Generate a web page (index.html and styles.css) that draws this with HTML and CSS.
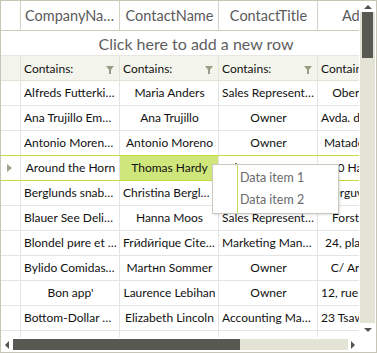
FILE: index.html
```html
<!DOCTYPE html>
<html>
<head>
<meta charset="utf-8">
<link rel="stylesheet" href="styles.css">
</head>
<body>
<div class="grid">
  <div class="viewport">
    <div class="row header">
      <div class="cell ind"></div>
      <div class="cell col">CompanyName</div>
      <div class="cell col">ContactName</div>
      <div class="cell col">ContactTitle</div>
      <div class="cell col">Address</div>
    </div>
    <div class="row newrow"><span class="newtext">Click here to add a new row</span></div>
    <div class="row filter">
      <div class="cell ind"></div>
      <div class="cell col"><span class="flabel">Contains:</span><span class="funnel"></span></div>
      <div class="cell col"><span class="flabel">Contains:</span><span class="funnel"></span></div>
      <div class="cell col"><span class="flabel">Contains:</span><span class="funnel"></span></div>
      <div class="cell col"><span class="flabel">Contains:</span><span class="funnel"></span></div>
    </div>
    <div class="row data"><div class="cell ind"></div><div class="cell col">Alfreds Futterkiste</div><div class="cell col">Maria Anders</div><div class="cell col">Sales Representative</div><div class="cell col">Obere Str. 57</div></div>
    <div class="row data"><div class="cell ind"></div><div class="cell col">Ana Trujillo Emparedados y helados</div><div class="cell col">Ana Trujillo</div><div class="cell col">Owner</div><div class="cell col">Avda. de la Constitución 2222</div></div>
    <div class="row data"><div class="cell ind"></div><div class="cell col">Antonio Moreno Taquería</div><div class="cell col">Antonio Moreno</div><div class="cell col">Owner</div><div class="cell col">Mataderos 2312</div></div>
    <div class="row data selected"><div class="cell ind"><span class="arrow"></span></div><div class="cell col">Around the Horn</div><div class="cell col current">Thomas Hardy</div><div class="cell col">Sales Representative</div><div class="cell col">120 Hanover Sq.</div></div>
    <div class="row data"><div class="cell ind"></div><div class="cell col">Berglunds snabbköp</div><div class="cell col">Christina Berglund</div><div class="cell col">Order Administrator</div><div class="cell col">Berguvsvägen 8</div></div>
    <div class="row data"><div class="cell ind"></div><div class="cell col">Blauer See Delikatessen</div><div class="cell col">Hanna Moos</div><div class="cell col">Sales Representative</div><div class="cell col">Forsterstr. 57</div></div>
    <div class="row data"><div class="cell ind"></div><div class="cell col">Blondel pиre et fils</div><div class="cell col">Frйdйrique Citeaux</div><div class="cell col">Marketing Manager</div><div class="cell col">24, place Kléber</div></div>
    <div class="row data"><div class="cell ind"></div><div class="cell col">Bуlido Comidas preparadas</div><div class="cell col">Martнn Sommer</div><div class="cell col">Owner</div><div class="cell col">C/ Araquil, 67</div></div>
    <div class="row data"><div class="cell ind"></div><div class="cell col">Bon app'</div><div class="cell col">Laurence Lebihan</div><div class="cell col">Owner</div><div class="cell col">12, rue des Bouchers</div></div>
    <div class="row data"><div class="cell ind"></div><div class="cell col">Bottom-Dollar Markets</div><div class="cell col">Elizabeth Lincoln</div><div class="cell col">Accounting Manager</div><div class="cell col">23 Tsawassen Blvd.</div></div>
    <div class="row data"><div class="cell ind"></div><div class="cell col">B's Beverages</div><div class="cell col">Victoria Ashworth</div><div class="cell col">Sales Representative</div><div class="cell col">Fauntleroy Circus</div></div>

    <div class="menu">
      <div class="menu-item">Data item 1</div>
      <div class="menu-item">Data item 2</div>
    </div>
  </div>
  <div class="vscroll">
    <div class="varrow up"></div>
    <div class="vtrack"><div class="vthumb"></div></div>
    <div class="varrow down"></div>
  </div>
  <div class="hscroll">
    <div class="harrow left"></div>
    <div class="htrack"><div class="hthumb"></div></div>
    <div class="harrow right"></div>
  </div>
  <div class="corner"></div>
</div>
</body>
</html>
```
FILE: styles.css
```css
html, body {
  margin: 0;
  padding: 0;
  background: #ffffff;
}
.grid {
  width: 375px;
  height: 351px;
  border: 1px solid #c6c6b6;
  display: grid;
  grid-template-columns: 358px 17px;
  grid-template-rows: 336px 15px;
  font-family: Lato, "Open Sans", sans-serif;
  background: #fff;
}
.viewport {
  position: relative;
  overflow: hidden;
  background: #fff;
}
.row {
  display: flex;
  height: 24px;
  border-bottom: 1px solid #e4e4e4;
  white-space: nowrap;
}
.cell {
  flex: none;
  box-sizing: border-box;
  border-right: 1px solid #e4e4e4;
  overflow: hidden;
  text-overflow: ellipsis;
  white-space: nowrap;
}
.ind {
  width: 20px;
  display: flex;
  align-items: center;
  justify-content: center;
}
.col {
  width: 99px;
  padding: 0 2px 0 3px;
  text-align: center;
}
.header {
  height: 29px;
  border-bottom: 1px solid #cdcdbd;
}
.header .cell {
  border-right-color: #d3d3c4;
  line-height: 29px;
  font-size: 14.5px;
  color: #5a5a5a;
  padding: 0 3px 0 4px;
}
.newrow {
  justify-content: center;
  align-items: center;
  padding-left: 32px;
  font-size: 16px;
  color: #5e5e5e;
  border-bottom-color: #e8e8e0;
}
.filter {
  background: #f3f4ec;
  border-bottom-color: #e2e2d6;
}
.filter .cell {
  display: flex;
  align-items: center;
  justify-content: space-between;
  padding: 0 5px 0 3px;
  border-right-color: #e2e2d6;
  font-size: 12px;
  color: #111;
}
.funnel {
  width: 0;
  height: 0;
  border-left: 4px solid transparent;
  border-right: 4px solid transparent;
  border-top: 5px solid #9c9c84;
  position: relative;
  margin-top: 1px;
}
.funnel::after {
  content: "";
  position: absolute;
  left: -1px;
  top: -1px;
  width: 2px;
  height: 4px;
  background: #9c9c84;
}
.data .cell {
  line-height: 24px;
  font-size: 12px;
  color: #111;
}
.selected {
  border-top: 1px solid #c3de3e;
  border-bottom: 1px solid #c3de3e;
  margin-top: -1px;
}
.current {
  background: #cfe67a;
}
.arrow {
  width: 0;
  height: 0;
  border-top: 4.5px solid transparent;
  border-bottom: 4.5px solid transparent;
  border-left: 5px solid #a3a392;
  margin-left: -2px;
}
.menu {
  position: absolute;
  left: 211px;
  top: 163px;
  width: 125px;
  padding: 2px 0;
  background: #fff;
  border: 1px solid #c9c9bd;
  box-shadow: 1px 1px 2px rgba(0,0,0,0.12);
  background-image: linear-gradient(to right, transparent 24px, #c6df58 24px, #c6df58 25px, transparent 25px);
}
.menu-item {
  height: 22px;
  line-height: 22px;
  padding-left: 27px;
  font-size: 12.5px;
  color: #6a6a6a;
}
.vscroll {
  display: flex;
  flex-direction: column;
  background: #fff;
}
.varrow {
  height: 11px;
  display: flex;
  justify-content: center;
  align-items: center;
}
.varrow.up::before {
  content: "";
  border-left: 4px solid transparent;
  border-right: 4px solid transparent;
  border-bottom: 4px solid #555550;
}
.varrow.down {
  height: 14px;
}
.varrow.down::before {
  content: "";
  border-left: 4px solid transparent;
  border-right: 4px solid transparent;
  border-top: 4px solid #555550;
}
.vtrack {
  flex: 1;
  background: #e3e4d6;
  margin: 0 1px 0 1px;
  padding-left: 2px;
}
.vthumb {
  width: 11px;
  height: 46px;
  background: #595954;
}
.hscroll {
  display: flex;
  align-items: center;
  background: #fff;
}
.harrow {
  width: 12px;
  height: 15px;
  display: flex;
  align-items: center;
  justify-content: center;
}
.harrow.left::before {
  content: "";
  border-top: 4px solid transparent;
  border-bottom: 4px solid transparent;
  border-right: 4px solid #555550;
}
.harrow.right {
  width: 12px;
}
.harrow.right::before {
  content: "";
  border-top: 4px solid transparent;
  border-bottom: 4px solid transparent;
  border-left: 4px solid #555550;
}
.htrack {
  flex: 1;
  height: 11px;
  background: #e3e4d6;
  margin-right: -1px;
}
.hthumb {
  width: 227px;
  height: 11px;
  background: #595954;
}
.corner {
  background: #fff;
}
```
